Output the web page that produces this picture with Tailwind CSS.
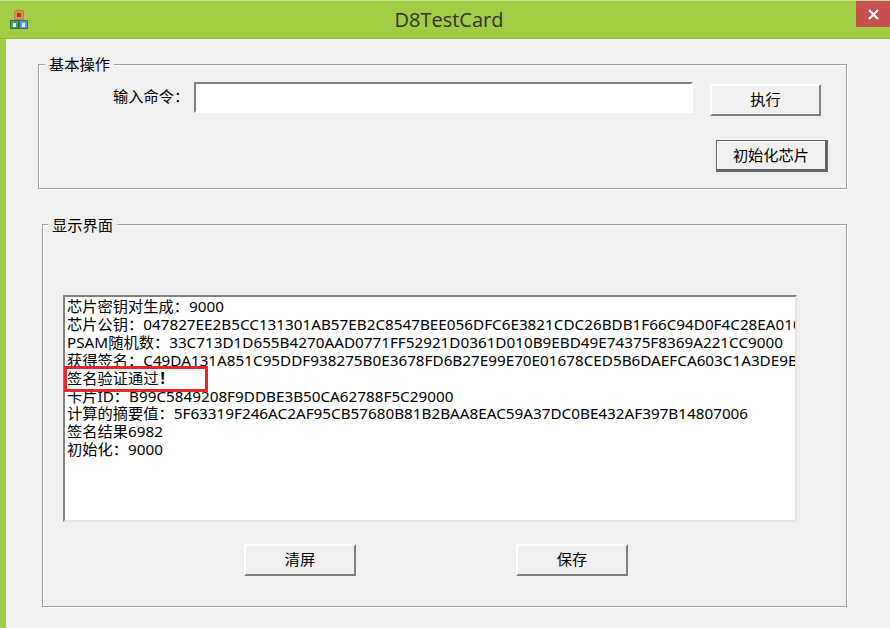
<!DOCTYPE html>
<html lang="zh-CN">
<head>
    <meta charset="UTF-8">
    <title>D8TestCard</title>
    <script src="https://cdn.jsdelivr.net/npm/@tailwindcss/browser@4"></script>
</head>
<body class="w-[890px] h-[628px] overflow-hidden bg-[#a1cd45] text-[15.25px] text-black font-['Noto_Sans','Noto_Sans_CJK_SC',sans-serif]">

    <!-- Title bar -->
    <div class="relative h-[39px] flex items-center justify-center border-t border-[#c5e08c] border-b border-b-[#8fb83c]">
        <svg class="absolute left-[9px] top-[8px]" width="20" height="22" viewBox="0 0 20 22">
            <rect x="5.5" y="1.5" width="9" height="9" rx="1" fill="#ea8a50" stroke="#c9754a"/>
            <rect x="8" y="4" width="4" height="4" fill="#8a4a2a"/>
            <rect x="1.5" y="11.5" width="8" height="8" fill="#45a068" stroke="#2f6f50"/>
            <rect x="4" y="14" width="3" height="4" fill="#d5efd8"/>
            <rect x="10.5" y="11.5" width="8" height="8" fill="#5a9cdd" stroke="#3a6a95"/>
            <rect x="13" y="14" width="3" height="4" fill="#dbe9f8"/>
        </svg>
        <span class="ml-[8px] text-[20px] text-[#333] font-['Open_Sans',sans-serif]">D8TestCard</span>
        <div class="absolute right-0 top-0 w-[34px] h-[26px] bg-[#c75050] flex items-center justify-center">
            <svg width="11" height="11" viewBox="0 0 11 11"><path d="M1 1 10 10M10 1 1 10" stroke="#fff" stroke-width="2.2"/></svg>
        </div>
    </div>

    <!-- Client area -->
    <div class="ml-[6px] h-[589px] bg-[#f0f0f0] pt-[25px] pr-[43px]">

        <!-- 基本操作 -->
        <div class="relative ml-[32px] h-[125px] border border-[#a0a0a0] shadow-[1px_1px_0_#fff,inset_1px_1px_0_#fff] pl-[18px] pr-[18px] pt-[17px]">
            <span class="absolute left-[6px] top-[-10px] px-[4px] bg-[#f0f0f0] leading-[18px]">基本操作</span>
            <div class="flex items-start">
                <label class="ml-[56px] w-[81px] mt-[5px] leading-[18px]">输入命令&#xFF1A;</label>
                <div class="w-[499px] h-[31px] bg-white border-2 border-t-[#808080] border-l-[#808080] border-r-white border-b-white"></div>
                <button class="ml-[17px] mt-[2px] w-[111px] h-[32px] pb-[2px] bg-[#f0f0f0] border-2 border-t-white border-l-white border-r-[#808080] border-b-[#808080]">执行</button>
            </div>
            <div class="flex justify-end mt-[24px]">
                <button class="w-[112px] h-[32px] bg-[#f0f0f0] border border-b-[3px] border-r-[3px] border-[#666] shadow-[inset_1px_1px_0_#fff]">初始化芯片</button>
            </div>
        </div>

        <!-- 显示界面 -->
        <div class="relative ml-[36px] mt-[35px] h-[383px] border border-[#a0a0a0] shadow-[1px_1px_0_#fff,inset_1px_1px_0_#fff] px-[20px] pt-[70px]">
            <span class="absolute left-[5px] top-[-9px] px-[4px] bg-[#f0f0f0] leading-[18px]">显示界面</span>
            <div class="w-[734px] h-[227px] bg-white border-2 border-t-[#808080] border-l-[#808080] border-r-[#e4e4e4] border-b-[#e4e4e4] pl-[2px] pt-[1px] overflow-hidden whitespace-nowrap leading-[17.9px]">
                <div>芯片密钥对生成&#xFF1A;9000</div>
                <div>芯片公钥&#xFF1A;047827EE2B5CC131301AB57EB2C8547BEE056DFC6E3821CDC26BDB1F66C94D0F4C28EA010</div>
                <div>PSAM随机数&#xFF1A;33C713D1D655B4270AAD0771FF52921D0361D010B9EBD49E74375F8369A221CC9000</div>
                <div>获得签名&#xFF1A;C49DA131A851C95DDF938275B0E3678FD6B27E99E70E01678CED5B6DAEFCA603C1A3DE9B</div>
                <div>签名验证通过<span class="font-bold pl-[2px]">!</span></div>
                <div>卡片ID&#xFF1A;B99C5849208F9DDBE3B50CA62788F5C29000</div>
                <div>计算的摘要值&#xFF1A;5F63319F246AC2AF95CB57680B81B2BAA8EAC59A37DC0BE432AF397B14807006</div>
                <div>签名结果6982</div>
                <div>初始化&#xFF1A;9000</div>
            </div>
            <!-- red annotation box -->
            <div class="absolute left-[21px] top-[141px] w-[144px] h-[26px] border-[3px] border-[#e8262a]"></div>
            <div class="flex mt-[22px] ml-[181px] gap-[160px]">
                <button class="w-[112px] h-[32px] pb-[2px] bg-[#f0f0f0] border-2 border-t-white border-l-white border-r-[#808080] border-b-[#808080]">清屏</button>
                <button class="w-[112px] h-[32px] pb-[2px] bg-[#f0f0f0] border-2 border-t-white border-l-white border-r-[#808080] border-b-[#808080]">保存</button>
            </div>
        </div>
    </div>
</body>
</html>
